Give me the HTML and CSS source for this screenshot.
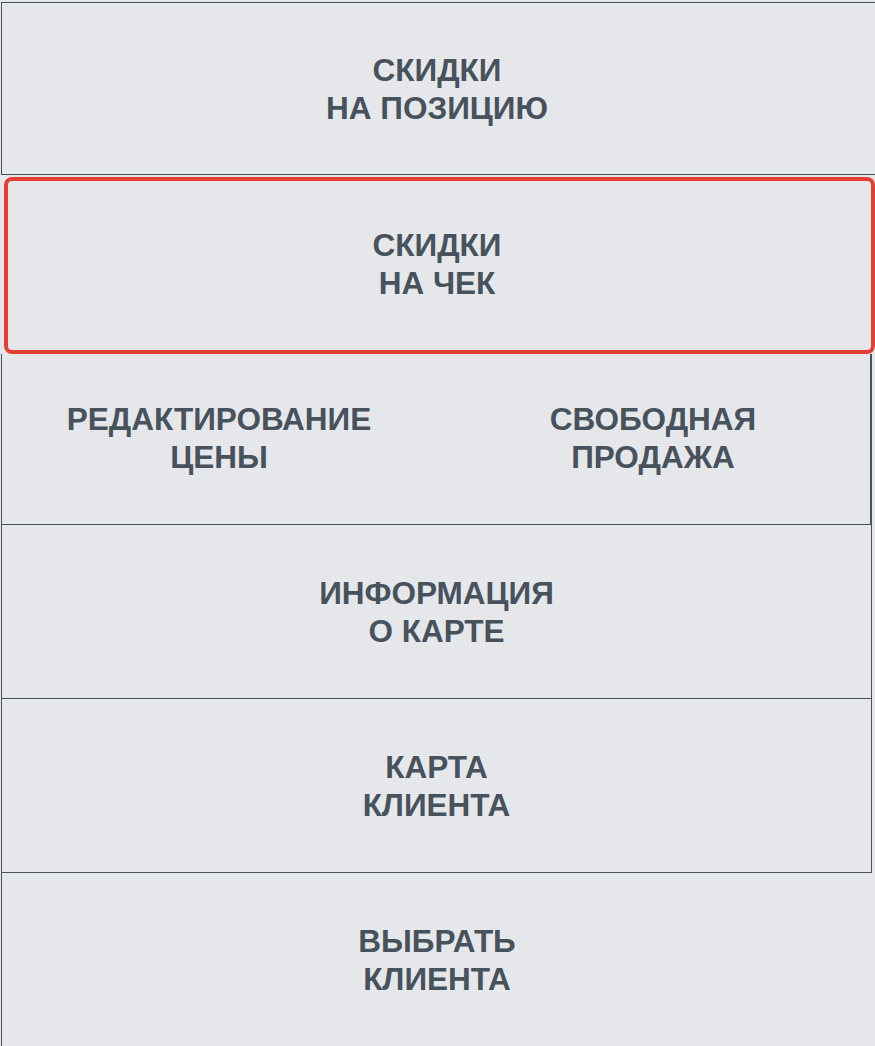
FILE: index.html
```html
<!DOCTYPE html>
<html lang="ru">
<head>
  <meta charset="UTF-8" />
  <title>Операции</title>
  <meta name="viewport" content="width=device-width, initial-scale=1.0">
  <link rel="stylesheet" href="styles.css">
</head>
<body>

  <!-- Меню операций кассы -->
  <div class="menu">
    <button class="tile tile-top">СКИДКИ<br>НА ПОЗИЦИЮ</button>
    <button class="tile tile-active">СКИДКИ<br>НА ЧЕК</button>

    <div class="tile tile-pair">
      <button class="half">РЕДАКТИРОВАНИЕ<br>ЦЕНЫ</button>
      <button class="half">СВОБОДНАЯ<br>ПРОДАЖА</button>
    </div>

    <button class="tile">ИНФОРМАЦИЯ<br>О КАРТЕ</button>
    <button class="tile">КАРТА<br>КЛИЕНТА</button>
    <button class="tile tile-bottom">ВЫБРАТЬ<br>КЛИЕНТА</button>
  </div>

</body>
</html>
```

FILE: styles.css
```css
html, body {
  margin: 0;
  padding: 0;
  height: 100%;
  overflow: hidden;
  background: #e6e7ea;
}

.menu {
  display: flex;
  flex-direction: column;
  width: 871px;
  margin-left: 1px;
  padding-top: 2px;
}

.tile,
.half {
  font-family: "Liberation Sans", Arial, sans-serif;
  font-weight: bold;
  font-size: 31.5px;
  line-height: 38px;
  color: #47525d;
  background: #e6e7ea;
  text-align: center;
  cursor: pointer;
  padding: 0;
}

.tile {
  display: flex;
  align-items: center;
  justify-content: center;
  box-sizing: border-box;
  width: 871px;
  height: 174px;
  border: 1px solid #47525d;
  border-top: none;
}

/* первая и последняя плитки уходят за правый край */
.tile-top {
  width: 900px;
  height: 173px;
  padding-right: 29px;
  border-top: 1px solid #47525d;
  border-right: none;
}

.tile-bottom {
  width: 900px;
  padding-right: 29px;
  border-right: none;
  border-bottom: none;
}

/* выбранная плитка */
.tile-active {
  width: 871px;
  height: 177px;
  margin: 2px -3px 0 3px;
  padding: 0 5px 4px 0;
  border: 4px solid #e53e33;
  border-radius: 8px;
}

.tile-pair {
  height: 171px;
  padding-bottom: 3px;
  border-right-width: 2px;
  display: grid;
  grid-template-columns: 1fr 1fr;
  cursor: default;
}

.half {
  border: none;
  height: 100%;
}
```
